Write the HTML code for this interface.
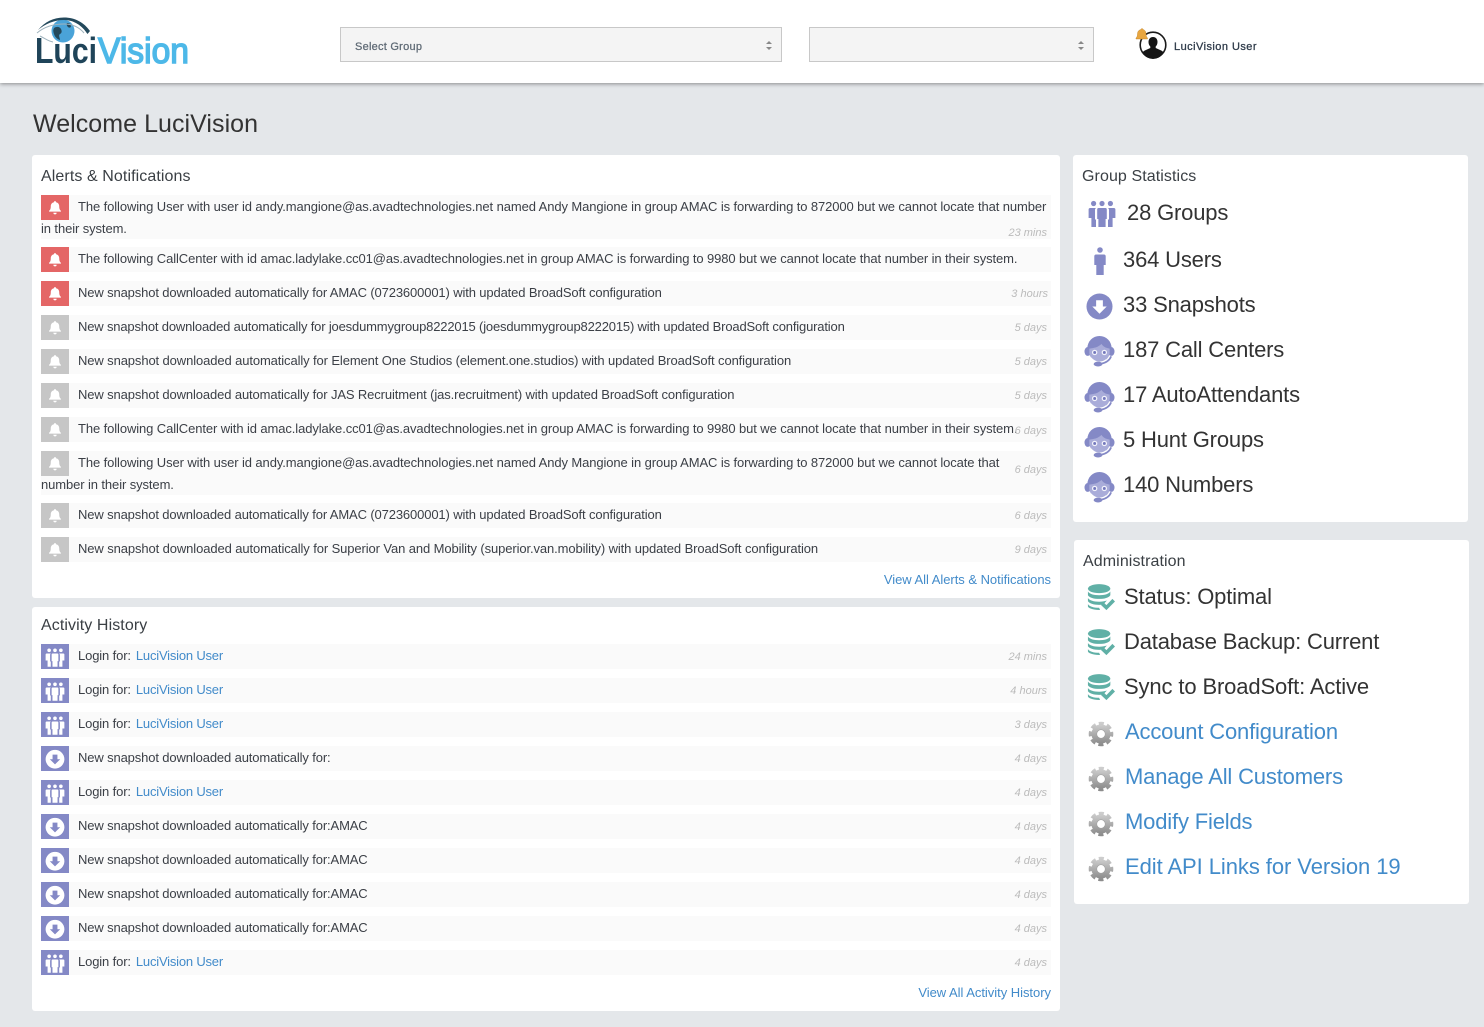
<!DOCTYPE html>
<html><head><meta charset="utf-8"><title>LuciVision</title>
<style>
html,body{margin:0;padding:0}
body{width:1484px;height:1027px;position:relative;overflow:hidden;background:#e4e7ea;font-family:"Liberation Sans",Arial,sans-serif;color:#333}
.hd{position:absolute;left:0;top:0;width:1484px;height:83px;background:#fff;box-shadow:0 1px 4px rgba(0,0,0,.4)}
.sel{position:absolute;top:27px;height:33px;background:#f4f4f4;border:1px solid #c8c8c8;box-sizing:content-box}
.sel span{position:absolute;left:14px;top:12px;font-size:11px;line-height:14px;color:#5f6a75;-webkit-text-stroke:.25px #5f6a75;letter-spacing:.25px}
.sel i{position:absolute;right:9px;top:13px;width:0;height:0;border-left:3px solid transparent;border-right:3px solid transparent;border-bottom:3px solid #888}
.sel b{position:absolute;right:9px;top:19px;width:0;height:0;border-left:3px solid transparent;border-right:3px solid transparent;border-top:3px solid #888}
.card{position:absolute;background:#fff;border-radius:3px}
h1{position:absolute;left:33px;top:109px;margin:0;font-size:25px;line-height:30px;font-weight:400;color:#333;letter-spacing:.05px}
h3{position:absolute;margin:0;font-size:16px;line-height:20px;font-weight:400;color:#3a3f44;letter-spacing:.09px}
.r{position:absolute;left:41px;width:1010px;box-sizing:border-box;padding-top:1px;background:#fafafa;font-size:13px;line-height:22px;color:#3b3f46;letter-spacing:-.13px}
.r .ic{float:left;width:28px;height:25px;margin:-1px 9px -3px 0}
.r .ic svg{display:block}
.r a{margin-left:1.500px;letter-spacing:-.2px}
.t{position:absolute;right:4px;font-size:11px;line-height:14px;font-style:italic;color:#bbb;margin-top:1px;letter-spacing:0}
a{color:#428bca;text-decoration:none}
.va{position:absolute;font-size:13px;line-height:16px;color:#428bca;letter-spacing:-.03px}
.s{position:absolute;font-size:22px;line-height:28px;color:#333;white-space:nowrap;letter-spacing:-.17px}
.s a{color:#428bca}
svg.i{position:absolute}
</style></head><body>
<svg width="0" height="0" style="position:absolute">
<defs>
<linearGradient id="gg" x1="0" y1="0" x2="0" y2="1"><stop offset="0" stop-color="#cdcdcd"/><stop offset="1" stop-color="#8c8c8c"/></linearGradient>
<symbol id="bell" viewBox="0 0 28 25"><g transform="translate(1.4 -.7) scale(.9)"><path d="M14 7.600a1.200 1.200 0 0 1 1.200 1.300c2.200.5 3.500 2.200 3.500 4.500 0 2.700.7 4 1.900 5v.8H7.400v-.8c1.200-1 1.900-2.300 1.900-5 0-2.300 1.300-4 3.500-4.500A1.200 1.200 0 0 1 14 7.600z" fill="#fff"/><path d="M12.200 20.500h3.600a1.800 1.800 0 0 1-3.600 0z" fill="#fff"/></g></symbol>
<symbol id="grp" viewBox="0 0 28 28"><g fill="currentColor"><circle cx="5.600" cy="3.500" r="2.600"/><circle cx="14" cy="3.500" r="2.600"/><circle cx="22.400" cy="3.500" r="2.600"/><path d="M.6 9.500C.6 8.500 1.300 8 2.100 8H8C7.200 8.600 7 9.300 7 10.200V19l1 1v7H3.400V18H.6z"/><path d="M27.400 9.500c0-1-.7-1.500-1.500-1.500H20c.8.600 1 1.300 1 2.200V19l-1 1v7h4.600V18h2.800z"/><path d="M10.500 8h7c.8 0 1.300.6 1.300 1.500V19h-1.200v8h-7.200v-8H9.200V9.500c0-.9.5-1.500 1.300-1.500z"/></g></symbol>
<symbol id="usr" viewBox="0 0 14 28"><g fill="#8489c6"><circle cx="7" cy="3" r="2.800"/><path d="M3 7.500h8c1 0 1.700.7 1.700 1.700V18h-2v10H3.300V18h-2V9.200C1.300 8.200 2 7.500 3 7.500z"/></g></symbol>
<symbol id="dl" viewBox="0 0 28 28"><circle cx="14" cy="14" r="13.500" fill="currentColor"/><path d="M10.500 7.500h7V14h4L14 21.500 6.500 14h4z" fill="var(--a,#fff)"/></symbol>
<symbol id="agent" viewBox="0 0 32 34"><circle cx="16" cy="14.500" r="12.500" fill="#8489c6"/><ellipse cx="3.800" cy="18" rx="3.300" ry="4.600" fill="#8489c6"/><ellipse cx="28.200" cy="18" rx="3.300" ry="4.600" fill="#8489c6"/><path d="M5.500 15c4.500-.2 9.500-1.500 12.500-4.800 1.500 2.500 4 4.300 8.500 4.800V19c0 5-4.500 9.500-10.500 9.500S5.500 24 5.500 19z" fill="#a9acd9"/><circle cx="11" cy="19" r="2.800" fill="#f2f2fa"/><circle cx="21" cy="19" r="2.800" fill="#f2f2fa"/><circle cx="11" cy="19" r="1.500" fill="#7378bd"/><circle cx="21" cy="19" r="1.500" fill="#7378bd"/><path d="M7 24.500c2.500 3 5.500 4.500 9 4.500 3 0 5-1 7-2.500" stroke="#fff" stroke-width="1.200" fill="none"/><path d="M28 23c-1.500 4-5 6.500-10 7.500" stroke="#8489c6" stroke-width="1.800" fill="none"/><ellipse cx="14.500" cy="31" rx="4.500" ry="2.500" fill="#8489c6"/></symbol>
<symbol id="db" viewBox="0 0 30 30"><g fill="#60b0a6"><ellipse cx="13" cy="5" rx="12" ry="4.800"/><path d="M1 8c1.500 2.700 6.500 4 12 4s10.500-1.300 12-4v4c-1.500 2.700-6.500 4-12 4S2.500 14.700 1 12z"/><path d="M1 15c1.500 2.700 6.500 4 12 4 3 0 6-.4 8.300-1.300L17.500 22c-1.500.2-3 .4-4.500.4-5.500 0-10.500-1.300-12-4z"/><path d="M1 21.500c1.500 2.700 6.500 4 12 4l1 2.300c-.3 0-.7 0-1 0-6.500 0-12-2-12-3.800z"/><path d="M15 22.500l2.800-2.800 3 3L27.200 16 30 18.800 20.800 28z"/></g></symbol>
<symbol id="gear" viewBox="0 0 28 28"><circle cx="14" cy="14" r="10.300" fill="url(#gg)"/><circle cx="14" cy="14" r="11.500" fill="none" stroke="url(#gg)" stroke-width="3.500" stroke-dasharray="5.500 3.530" stroke-dashoffset="2.750"/><circle cx="14" cy="14" r="4.600" fill="#fff" stroke="#a0a0a0" stroke-width=".7"/></symbol>
</defs></svg>

<div class="hd"></div>
<svg class="i" style="left:30px;top:12px" width="165" height="58" viewBox="0 0 165 58">
<circle cx="33" cy="19" r="11.500" fill="#4aa3d8"/>
<path d="M24 16c3-2 6-1 7 1s1 4-1 5 0 4 0 6c-3-1-5-3-6-6s-1-4 0-6zM37 11c2 0 4 1 4 3s-2 2-3 1-2-3-1-4z" fill="#24495c"/>
<path d="M8 18C15 10 23 5.500 34 5.500c11 0 20 5 26 13.500l-2.500 3C52 13.500 44 8 34 8 24 8 15 12 8 18z" fill="#24495c"/>
<path d="M7 21c7-6 15-9 27-9 8 0 15 3 20 9" fill="none" stroke="#9fb3bd" stroke-width="1"/>
<path d="M10 24c6 3 8 5 13 6" fill="none" stroke="#9fb3bd" stroke-width="1"/>
<text x="5" y="51" font-family="Liberation Sans" font-size="36" font-weight="700" fill="#1f4459" textLength="62" lengthAdjust="spacingAndGlyphs">Luci</text>
<text x="68" y="51" font-family="Liberation Sans" font-size="36" font-weight="400" stroke="#4db8e8" stroke-width="1.500" fill="#4db8e8" textLength="91" lengthAdjust="spacingAndGlyphs">Vision</text>
</svg>
<div class="sel" style="left:340px;width:440px"><span>Select Group</span><i></i><b></b></div>
<div class="sel" style="left:809px;width:283px"><i></i><b></b></div>
<svg class="i" style="left:1135px;top:27px" width="34" height="34" viewBox="0 0 34 34">
<circle cx="18" cy="18" r="12.800" fill="#fff" stroke="#1a1a1a" stroke-width="1.600"/>
<path d="M18 10c3 0 4.500 2.300 4.500 5 0 2-.7 3.500-1.800 4.500v1.500l5.500 2.500c1.500.7 2 1.500 2.300 2.500A13 13 0 0 1 18 32a13 13 0 0 1-10.500-6c.3-1 .8-1.800 2.300-2.500l5.500-2.500v-1.500C14.200 18.500 13.500 17 13.500 15c0-2.700 1.500-5 4.500-5z" fill="#151515"/>
<path d="M7 1.500c.5 0 1 .5 1 1 2 .6 3 2.200 3 4.500 0 2 .6 3 1.500 4v1H1v-1c1-1 1.500-2 1.500-4 0-2.300 1-3.900 3.500-4.500 0-.5.500-1 1-1z" fill="#e8a640" stroke="#b97a20" stroke-width=".4"/>
</svg>
<div style="position:absolute;left:1174px;top:40px;font-size:11px;line-height:14px;color:#2f3b4a;-webkit-text-stroke:.3px #2f3b4a;letter-spacing:.45px">LuciVision User</div>

<h1>Welcome LuciVision</h1>

<div class="card" style="left:32px;top:155px;width:1028px;height:443px"></div>
<div class="card" style="left:32px;top:607px;width:1028px;height:404px"></div>
<div class="card" style="left:1073px;top:155px;width:395px;height:367px"></div>
<div class="card" style="left:1074px;top:540px;width:395px;height:364px"></div>

<h3 style="left:41px;top:167px">Alerts &amp; Notifications</h3>
<h3 style="left:41px;top:616px">Activity History</h3>
<h3 style="left:1082px;top:167px">Group Statistics</h3>
<h3 style="left:1083px;top:552px">Administration</h3>

<div class="r" style="top:195px;height:44px;letter-spacing:-.1px"><span class="ic" style="background:#e46666"><svg width="28" height="25"><use href="#bell"/></svg></span>The following User with user id andy.mangione@as.avadtechnologies.net named Andy Mangione in group AMAC is forwarding to 872000 but we cannot locate that number in their system.<span class="t" style="top:30px">23 mins</span></div>
<div class="r" style="top:247px;height:25px;letter-spacing:-.1px"><span class="ic" style="background:#e46666"><svg width="28" height="25"><use href="#bell"/></svg></span>The following CallCenter with id amac.ladylake.cc01@as.avadtechnologies.net in group AMAC is forwarding to 9980 but we cannot locate that number in their system.</div>
<div class="r" style="top:281px;height:25px"><span class="ic" style="background:#e46666"><svg width="28" height="25"><use href="#bell"/></svg></span>New snapshot downloaded automatically for AMAC (0723600001) with updated BroadSoft configuration<span class="t" style="top:5px;right:3px">3 hours</span></div>
<div class="r" style="top:315px;height:25px;letter-spacing:-.17px"><span class="ic" style="background:#c6c6c6"><svg width="28" height="25"><use href="#bell"/></svg></span>New snapshot downloaded automatically for joesdummygroup8222015 (joesdummygroup8222015) with updated BroadSoft configuration<span class="t" style="top:5px">5 days</span></div>
<div class="r" style="top:349px;height:25px;letter-spacing:-.11px"><span class="ic" style="background:#c6c6c6"><svg width="28" height="25"><use href="#bell"/></svg></span>New snapshot downloaded automatically for Element One Studios (element.one.studios) with updated BroadSoft configuration<span class="t" style="top:5px">5 days</span></div>
<div class="r" style="top:383px;height:25px;letter-spacing:-.12px"><span class="ic" style="background:#c6c6c6"><svg width="28" height="25"><use href="#bell"/></svg></span>New snapshot downloaded automatically for JAS Recruitment (jas.recruitment) with updated BroadSoft configuration<span class="t" style="top:5px">5 days</span></div>
<div class="r" style="top:417px;height:25px;white-space:nowrap;letter-spacing:-.1px"><span class="ic" style="background:#c6c6c6"><svg width="28" height="25"><use href="#bell"/></svg></span>The following CallCenter with id amac.ladylake.cc01@as.avadtechnologies.net in group AMAC is forwarding to 9980 but we cannot locate that number in their system.<span class="t" style="top:6px">6 days</span></div>
<div class="r" style="top:451px;height:44px;padding-right:46px;letter-spacing:-.1px"><span class="ic" style="background:#c6c6c6"><svg width="28" height="25"><use href="#bell"/></svg></span>The following User with user id andy.mangione@as.avadtechnologies.net named Andy Mangione in group AMAC is forwarding to 872000 but we cannot locate that number in their system.<span class="t" style="top:11px">6 days</span></div>
<div class="r" style="top:503px;height:25px"><span class="ic" style="background:#c6c6c6"><svg width="28" height="25"><use href="#bell"/></svg></span>New snapshot downloaded automatically for AMAC (0723600001) with updated BroadSoft configuration<span class="t" style="top:5px">6 days</span></div>
<div class="r" style="top:537px;height:25px;letter-spacing:-.105px"><span class="ic" style="background:#c6c6c6"><svg width="28" height="25"><use href="#bell"/></svg></span>New snapshot downloaded automatically for Superior Van and Mobility (superior.van.mobility) with updated BroadSoft configuration<span class="t" style="top:5px">9 days</span></div>
<a class="va" style="right:433px;top:572px" href="#">View All Alerts &amp; Notifications</a>

<div class="r" style="top:644px;height:25px"><span class="ic" style="background:#8489c6;color:#fff"><svg width="28" height="25" viewBox="-6 -5.500 40 35.700"><use href="#grp" width="28" height="28"/></svg></span>Login for: <a href="#">LuciVision User</a><span class="t" style="top:5px">24 mins</span></div>
<div class="r" style="top:678px;height:25px"><span class="ic" style="background:#8489c6;color:#fff"><svg width="28" height="25" viewBox="-6 -5.500 40 35.700"><use href="#grp" width="28" height="28"/></svg></span>Login for: <a href="#">LuciVision User</a><span class="t" style="top:5px">4 hours</span></div>
<div class="r" style="top:712px;height:25px"><span class="ic" style="background:#8489c6;color:#fff"><svg width="28" height="25" viewBox="-6 -5.500 40 35.700"><use href="#grp" width="28" height="28"/></svg></span>Login for: <a href="#">LuciVision User</a><span class="t" style="top:5px">3 days</span></div>
<div class="r" style="top:746px;height:25px"><span class="ic" style="background:#8489c6;color:#fff;--a:#8489c6"><svg width="28" height="25" viewBox="-6 -5 40 36"><use href="#dl" width="28" height="28"/></svg></span>New snapshot downloaded automatically for:<span class="t" style="top:5px">4 days</span></div>
<div class="r" style="top:780px;height:25px"><span class="ic" style="background:#8489c6;color:#fff"><svg width="28" height="25" viewBox="-6 -5.500 40 35.700"><use href="#grp" width="28" height="28"/></svg></span>Login for: <a href="#">LuciVision User</a><span class="t" style="top:5px">4 days</span></div>
<div class="r" style="top:814px;height:25px"><span class="ic" style="background:#8489c6;color:#fff;--a:#8489c6"><svg width="28" height="25" viewBox="-6 -5 40 36"><use href="#dl" width="28" height="28"/></svg></span>New snapshot downloaded automatically for:AMAC<span class="t" style="top:5px">4 days</span></div>
<div class="r" style="top:848px;height:25px"><span class="ic" style="background:#8489c6;color:#fff;--a:#8489c6"><svg width="28" height="25" viewBox="-6 -5 40 36"><use href="#dl" width="28" height="28"/></svg></span>New snapshot downloaded automatically for:AMAC<span class="t" style="top:5px">4 days</span></div>
<div class="r" style="top:882px;height:25px"><span class="ic" style="background:#8489c6;color:#fff;--a:#8489c6"><svg width="28" height="25" viewBox="-6 -5 40 36"><use href="#dl" width="28" height="28"/></svg></span>New snapshot downloaded automatically for:AMAC<span class="t" style="top:5px">4 days</span></div>
<div class="r" style="top:916px;height:25px"><span class="ic" style="background:#8489c6;color:#fff;--a:#8489c6"><svg width="28" height="25" viewBox="-6 -5 40 36"><use href="#dl" width="28" height="28"/></svg></span>New snapshot downloaded automatically for:AMAC<span class="t" style="top:5px">4 days</span></div>
<div class="r" style="top:950px;height:25px"><span class="ic" style="background:#8489c6;color:#fff"><svg width="28" height="25" viewBox="-6 -5.500 40 35.700"><use href="#grp" width="28" height="28"/></svg></span>Login for: <a href="#">LuciVision User</a><span class="t" style="top:5px">4 days</span></div>
<a class="va" style="right:433px;top:985px" href="#">View All Activity History</a>

<svg class="i" style="left:1088px;top:200px;color:#8489c6" width="28" height="28"><use href="#grp"/></svg>
<div class="s" style="left:1127px;top:199px">28 Groups</div>
<svg class="i" style="left:1093px;top:247px" width="14" height="28"><use href="#usr"/></svg>
<div class="s" style="left:1123px;top:246px">364 Users</div>
<svg class="i" style="left:1086px;top:293px;color:#8489c6;--a:#fff" width="27" height="27"><use href="#dl"/></svg>
<div class="s" style="left:1123px;top:291px">33 Snapshots</div>
<svg class="i" style="left:1084px;top:334px" width="31" height="33"><use href="#agent"/></svg>
<div class="s" style="left:1123px;top:336px">187 Call Centers</div>
<svg class="i" style="left:1084px;top:380px" width="31" height="33"><use href="#agent"/></svg>
<div class="s" style="left:1123px;top:381px">17 AutoAttendants</div>
<svg class="i" style="left:1084px;top:425px" width="31" height="33"><use href="#agent"/></svg>
<div class="s" style="left:1123px;top:426px">5 Hunt Groups</div>
<svg class="i" style="left:1084px;top:470px" width="31" height="33"><use href="#agent"/></svg>
<div class="s" style="left:1123px;top:471px">140 Numbers</div>

<svg class="i" style="left:1087px;top:584px" width="28" height="28"><use href="#db"/></svg>
<div class="s" style="left:1124px;top:583px">Status: Optimal</div>
<svg class="i" style="left:1087px;top:629px" width="28" height="28"><use href="#db"/></svg>
<div class="s" style="left:1124px;top:628px">Database Backup: Current</div>
<svg class="i" style="left:1087px;top:674px" width="28" height="28"><use href="#db"/></svg>
<div class="s" style="left:1124px;top:673px;letter-spacing:-.13px">Sync to BroadSoft: Active</div>
<svg class="i" style="left:1088px;top:721px" width="26" height="26"><use href="#gear"/></svg>
<div class="s" style="left:1125px;top:718px"><a href="#">Account Configuration</a></div>
<svg class="i" style="left:1088px;top:766px" width="26" height="26"><use href="#gear"/></svg>
<div class="s" style="left:1125px;top:763px"><a href="#">Manage All Customers</a></div>
<svg class="i" style="left:1088px;top:811px" width="26" height="26"><use href="#gear"/></svg>
<div class="s" style="left:1125px;top:808px"><a href="#">Modify Fields</a></div>
<svg class="i" style="left:1088px;top:856px" width="26" height="26"><use href="#gear"/></svg>
<div class="s" style="left:1125px;top:853px;letter-spacing:-.07px"><a href="#">Edit API Links for Version 19</a></div>
</body></html>
